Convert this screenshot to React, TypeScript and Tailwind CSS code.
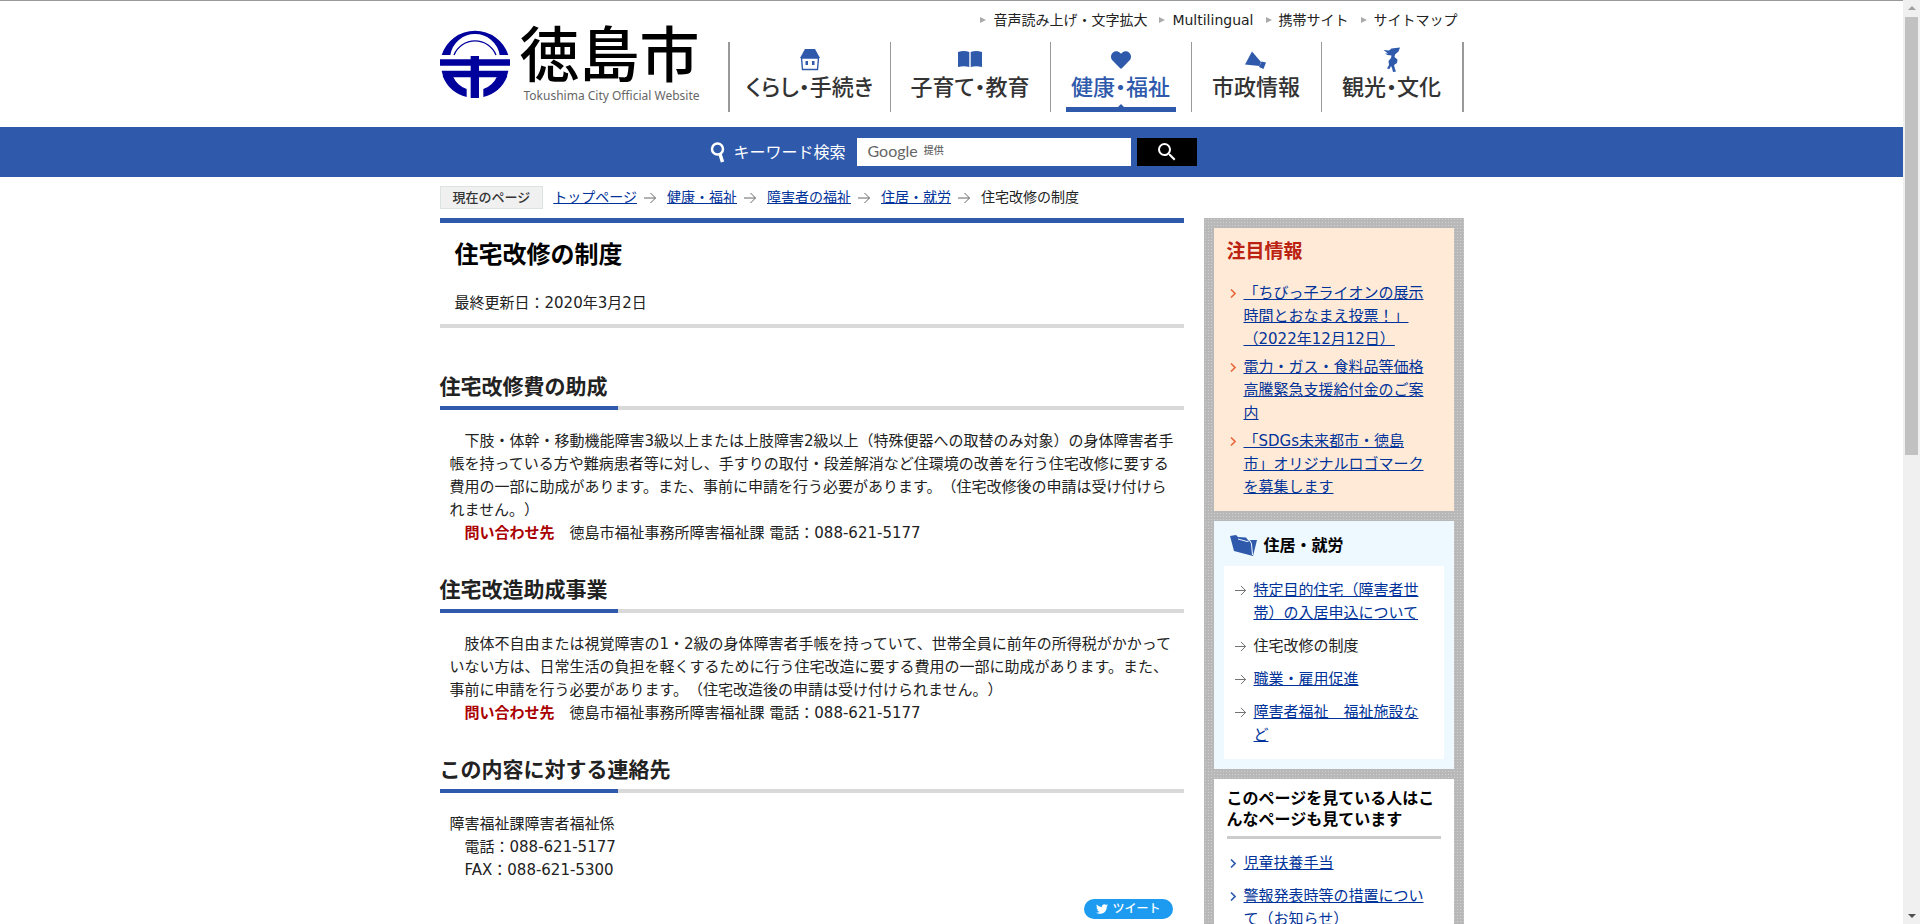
import type { ReactNode } from 'react'
import { FaHeart, FaTwitter } from 'react-icons/fa'
import { MdSearch } from 'react-icons/md'

const utilityLinks = ['音声読み上げ・文字拡大', 'Multilingual', '携帯サイト', 'サイトマップ']

const crumbs = ['トップページ', '健康・福祉', '障害者の福祉', '住居・就労']

const featured = [
  '「ちびっ子ライオンの展示時間とおなまえ投票！」（2022年12月12日）',
  '電力・ガス・食料品等価格高騰緊急支援給付金のご案内',
  '「SDGs未来都市・徳島市」オリジナルロゴマークを募集します',
]

const categoryLinks = [
  { label: '特定目的住宅（障害者世帯）の入居申込について' },
  { label: '住宅改修の制度', current: true },
  { label: '職業・雇用促進' },
  { label: '障害者福祉　福祉施設など' },
]

const related = ['児童扶養手当', '警報発表時等の措置について（お知らせ）']

function CityMark() {
  return (
    <svg viewBox="0 0 210 210" className="size-[70px] shrink-0" fill="#00009c" aria-hidden="true">
      <path d="M5 81A105 105 0 0 1 205 81H179A75 75 0 0 0 31 81Z" />
      <path d="M42 81A68 68 0 0 1 168 81" fill="none" stroke="#00009c" strokeWidth="4" />
      <path d="M0 94H92V84H117V94H210V113H117V128H205L200 148H117V210H92V148H10L5 128H92V113H0Z" />
      <path d="M8 144H38Q52 174 80 183V207A105 105 0 0 1 8 144Z" />
      <path d="M202 144H172Q158 174 130 183V207A105 105 0 0 0 202 144Z" />
    </svg>
  )
}

function HouseIcon() {
  return (
    <svg viewBox="0 0 20 22" className="h-[22px] w-5" aria-hidden="true">
      <path d="M5 0H15L20 9H0Z" fill="#2f5aac" />
      <path d="M1.5 9H18.5L17.5 20.5H2.5Z" fill="#fff" stroke="#2f5aac" strokeWidth="1.4" />
      <path d="M5.5 12H8V16H5.5ZM12 12H14.5V16H12Z" fill="#2f5aac" />
    </svg>
  )
}

function BookIcon() {
  return (
    <svg viewBox="0 0 24 22" className="h-[22px] w-6" fill="#2f5aac" aria-hidden="true">
      <path d="M0 3Q6 1 11.3 3V18Q6 16.5 0 18ZM12.7 3Q18 1 24 3V18Q18 16.5 12.7 18Z" />
    </svg>
  )
}

function MegaphoneIcon() {
  return (
    <svg viewBox="0 0 22 20" className="h-5 w-[22px]" fill="#2f5aac" aria-hidden="true">
      <path d="M7 1.5L0 14.500L14.500 16L16 12Z" />
      <path d="M16.500 11.5L21 12.500L18.500 19L14 17Z" />
    </svg>
  )
}

function DancerIcon() {
  return (
    <svg viewBox="0 0 18 26" className="h-[26px] w-[18px]" fill="#2f5aac" aria-hidden="true">
      <path d="M0.5 3L6 3.5L8.5 1.5L17 0.5L15.5 4.5L12 7.5L11.5 10L14.5 12.5L14 16L11 18L12 22L13 24.5L10 25L9 21L8 19L6.5 22L4 21.5L6 18L5.5 14L8 11L8.5 8.5L4.5 8L2 6.5L5 6.5Z" />
    </svg>
  )
}

function FolderIcon() {
  return (
    <svg viewBox="0 0 27 21" className="h-[21px] w-[27px]" aria-hidden="true">
      <path d="M0 1L6 0L8 2L16 2.5L18 5L27 5L23 21L4 16Z" fill="#2f5aac" />
      <path d="M8 4L17 6.500L20 5.500L21.500 9L22.500 20" fill="none" stroke="#eef8ff" strokeWidth="1" />
    </svg>
  )
}

function Arrow({ className }: { className: string }) {
  return (
    <svg viewBox="0 0 12 12" className={className} fill="none" stroke="#666" aria-hidden="true">
      <path d="M0 6H11.5M6.5 1L11.5 6L6.5 11" />
    </svg>
  )
}

function Chevron({ className }: { className: string }) {
  return (
    <svg viewBox="0 0 6 9" className={className} fill="none" stroke="currentColor" strokeWidth="1.6" aria-hidden="true">
      <path d="M1 0.5L5 4.5L1 8.5" />
    </svg>
  )
}

const navItems = [
  { label: 'くらし・手続き', icon: <HouseIcon />, width: 'w-[161px]' },
  { label: '子育て・教育', icon: <BookIcon />, width: 'w-[160px]' },
  { label: '健康・福祉', icon: <FaHeart className="size-5 text-[#2f5aac]" />, width: 'w-[141px]', active: true },
  { label: '市政情報', icon: <MegaphoneIcon />, width: 'w-[130px]' },
  { label: '観光・文化', icon: <DancerIcon />, width: 'w-[140px]' },
]

function Header() {
  return (
    <header className="border-t border-[#999]">
      <div className="mx-auto flex h-[126px] max-w-5xl justify-between">
        <a href="#" className="flex items-start gap-[10px] pt-[27px]">
          <CityMark />
          <span className="flex flex-col">
            <span className="-mt-1 text-[60px] leading-[64px] font-medium text-black">徳島市</span>
            <span className="px-1 font-['Noto_Sans'] text-[12px] leading-4 text-[#666]">Tokushima City Official Website</span>
          </span>
        </a>
        <div className="flex flex-col items-end">
          <ul className="flex h-[41px] items-start gap-3 pt-2 pr-[6px] text-[14px] leading-[22px]">
            {utilityLinks.map(label => (
              <li key={label} className="flex items-center gap-[7px]">
                <span className="border-y-[3px] border-l-[6px] border-y-transparent border-l-[#aaa]" />
                <a href="#">{label}</a>
              </li>
            ))}
          </ul>
          <nav>
            <ul className="flex h-[70px] divide-x divide-[#999] border-x-2 border-[#999]">
              {navItems.map(({ label, icon, width, active }) => (
                <li key={label} className={`flex flex-col px-[15px] ${width}`}>
                  <a
                    href="#"
                    className={
                      active
                        ? 'flex grow flex-col items-center border-b-[5px] border-[#2f5aac] text-[#2f5aac]'
                        : 'flex grow flex-col items-center text-[#333]'
                    }
                  >
                    <span className="flex h-[31px] items-center pt-1">{icon}</span>
                    <span className="text-[22px] leading-[30px] font-medium whitespace-nowrap [font-feature-settings:'palt']">{label}</span>
                    {active && <span className="mt-auto border-x-[3px] border-b-[3px] border-x-transparent border-b-[#2f5aac]" />}
                  </a>
                </li>
              ))}
            </ul>
          </nav>
        </div>
      </div>
    </header>
  )
}

function SearchBar() {
  return (
    <form className="flex h-[50px] items-center justify-center bg-[#2f5aac] pl-1" onSubmit={e => e.preventDefault()}>
      <label htmlFor="keyword" className="mr-[11px] flex items-center gap-2 text-[16px] text-white">
        <svg viewBox="0 0 15 21" className="h-[21px] w-[15px]" fill="none" stroke="#fff" aria-hidden="true">
          <circle cx="7.5" cy="7" r="5.5" strokeWidth="2.5" />
          <path d="M10 12L12.5 20" strokeWidth="3.5" />
        </svg>
        キーワード検索
      </label>
      <div className="relative mr-[6px]">
        <input id="keyword" type="text" className="block h-7 w-[274px] bg-white px-3 text-[14px] outline-none" />
        <span className="pointer-events-none absolute inset-y-0 left-[11px] flex items-center gap-[6px] pb-1 text-[#666]">
          <span className="font-['Lato'] text-[16px]">Google</span>
          <span className="text-[10px] font-medium">提供</span>
        </span>
      </div>
      <button type="submit" aria-label="検索" className="flex h-7 w-[60px] items-center justify-center bg-black text-white">
        <MdSearch className="size-6" />
      </button>
    </form>
  )
}

function Breadcrumbs() {
  return (
    <nav className="flex h-[41px] items-center text-[14px]">
      <span className="mr-[10px] border border-[#dde3e3] bg-[#f0f0f0] px-3 text-[13px] leading-[21px] font-medium text-[#333]">
        現在のページ
      </span>
      {crumbs.map(label => (
        <span key={label} className="flex items-center">
          <a href="#" className="text-[#039] underline">{label}</a>
          <Arrow className="mr-[11px] ml-[7px] size-3" />
        </span>
      ))}
      <span>住宅改修の制度</span>
    </nav>
  )
}

function Section({ title, children }: { title: string; children: ReactNode }) {
  return (
    <section>
      <h2 className="mt-[30px] pb-1 text-[21px] leading-[30px] font-bold text-[#222]">{title}</h2>
      <div className="mb-5 h-1 bg-[#d9d9d9]">
        <div className="h-1 w-[178px] bg-[#2f5aac]" />
      </div>
      <div className="pr-[5px] pl-[10px]">{children}</div>
    </section>
  )
}

function Inquiry() {
  return (
    <p>
      {'　'}
      <strong className="text-[#a00]">問い合わせ先</strong>
      {'　徳島市福祉事務所障害福祉課 電話：088-621-5177'}
    </p>
  )
}

function Article() {
  return (
    <main className="min-w-0 grow border-t-[5px] border-[#2f5aac]">
      <h1 className="px-[15px] pt-[14px] text-[24px] leading-9 font-bold text-black">住宅改修の制度</h1>
      <p className="border-b-4 border-[#d9d9d9] px-[15px] pt-[19px] pb-[9px]">最終更新日：2020年3月2日</p>
      <div className="pt-[14px]">
        <Section title="住宅改修費の助成">
          <p>
            {'　下肢・体幹・移動機能障害3級以上または上肢障害2級以上（特殊便器への取替のみ対象）の身体障害者手帳を持っている方や難病患者等に対し、手すりの取付・段差解消など住環境の改善を行う住宅改修に要する費用の一部に助成があります。また、事前に申請を行う必要があります。（住宅改修後の申請は受け付けられません。）'}
          </p>
          <Inquiry />
        </Section>
        <Section title="住宅改造助成事業">
          <p>
            {'　肢体不自由または視覚障害の1・2級の身体障害者手帳を持っていて、世帯全員に前年の所得税がかかっていない方は、日常生活の負担を軽くするために行う住宅改造に要する費用の一部に助成があります。また、事前に申請を行う必要があります。（住宅改造後の申請は受け付けられません。）'}
          </p>
          <Inquiry />
        </Section>
        <Section title="この内容に対する連絡先">
          <p>障害福祉課障害者福祉係</p>
          <p>{'　電話：088-621-5177'}</p>
          <p>{'　FAX：088-621-5300'}</p>
        </Section>
      </div>
      <div className="flex justify-end pt-[17px] pr-[11px]">
        <a href="#" className="flex h-5 items-center gap-1 rounded-full bg-[#1d9bf0] px-3 text-[12px] font-medium text-white">
          <FaTwitter className="size-3" />
          ツイート
        </a>
      </div>
    </main>
  )
}

function Sidebar() {
  return (
    <aside className="flex w-[260px] shrink-0 flex-col gap-[10px] bg-[#b8b8b8] bg-[radial-gradient(#d0d0d0_35%,transparent_35%)] bg-size-[3px_3px] p-[10px]">
      <section className="bg-[#ffead8] px-[13px] pt-[9px] pb-3">
        <h2 className="mb-[17px] text-[19px] leading-7 font-bold text-[#b21]">注目情報</h2>
        <ul className="flex flex-col gap-[5px] pr-[14px] pl-[3px]">
          {featured.map(label => (
            <li key={label} className="flex gap-2">
              <Chevron className="mt-[7px] h-[9px] w-[6px] shrink-0 text-[#e8693c]" />
              <a href="#" className="text-[#039] underline">{label}</a>
            </li>
          ))}
        </ul>
      </section>
      <section className="bg-[#eef8ff] px-[10px] pb-[10px]">
        <h2 className="flex h-[45px] items-center gap-[7px] px-[6px] pt-1 text-[16px] font-bold text-black">
          <FolderIcon />
          住居・就労
        </h2>
        <ul className="flex flex-col gap-[10px] bg-white px-[11px] pt-[13px] pb-3">
          {categoryLinks.map(({ label, current }) => (
            <li key={label} className="flex gap-2">
              <Arrow className="mt-[6px] size-[11px] shrink-0" />
              {current ? <span>{label}</span> : <a href="#" className="w-[168px] text-[#039] underline">{label}</a>}
            </li>
          ))}
        </ul>
      </section>
      <section className="bg-white px-[13px] pt-[9px] pb-3">
        <h2 className="mb-[13px] border-b-[3px] border-[#ccc] pb-[6px] text-[16px] leading-[21px] font-bold text-black">
          このページを見ている人はこんなページも見ています
        </h2>
        <ul className="flex flex-col gap-[10px] pr-[14px] pl-[3px]">
          {related.map(label => (
            <li key={label} className="flex gap-2">
              <Chevron className="mt-[7px] h-[9px] w-[6px] shrink-0 text-[#2f5aac]" />
              <a href="#" className="text-[#039] underline">{label}</a>
            </li>
          ))}
        </ul>
      </section>
    </aside>
  )
}

function Scrollbar() {
  return (
    <div className="flex w-[17px] shrink-0 flex-col items-center bg-[#f0f0f0] py-[6px]" aria-hidden="true">
      <span className="border-x-4 border-b-4 border-x-transparent border-b-[#a0a0a0]" />
      <span className="mt-[7px] h-[48%] w-[13px] bg-[#c1c1c1]" />
      <span className="mt-auto border-x-4 border-t-4 border-x-transparent border-t-[#505050]" />
    </div>
  )
}

export default function App() {
  return (
    <div className="flex h-screen bg-white font-['DejaVu_Sans','Noto_Sans_CJK_JP',sans-serif] text-[15px] leading-[23px] text-[#222] [text-spacing-trim:space-all]" lang="ja">
      <div className="grow overflow-hidden">
        <Header />
        <SearchBar />
        <div className="mx-auto max-w-5xl">
          <Breadcrumbs />
          <div className="flex items-start gap-5">
            <Article />
            <Sidebar />
          </div>
        </div>
      </div>
      <Scrollbar />
    </div>
  )
}
